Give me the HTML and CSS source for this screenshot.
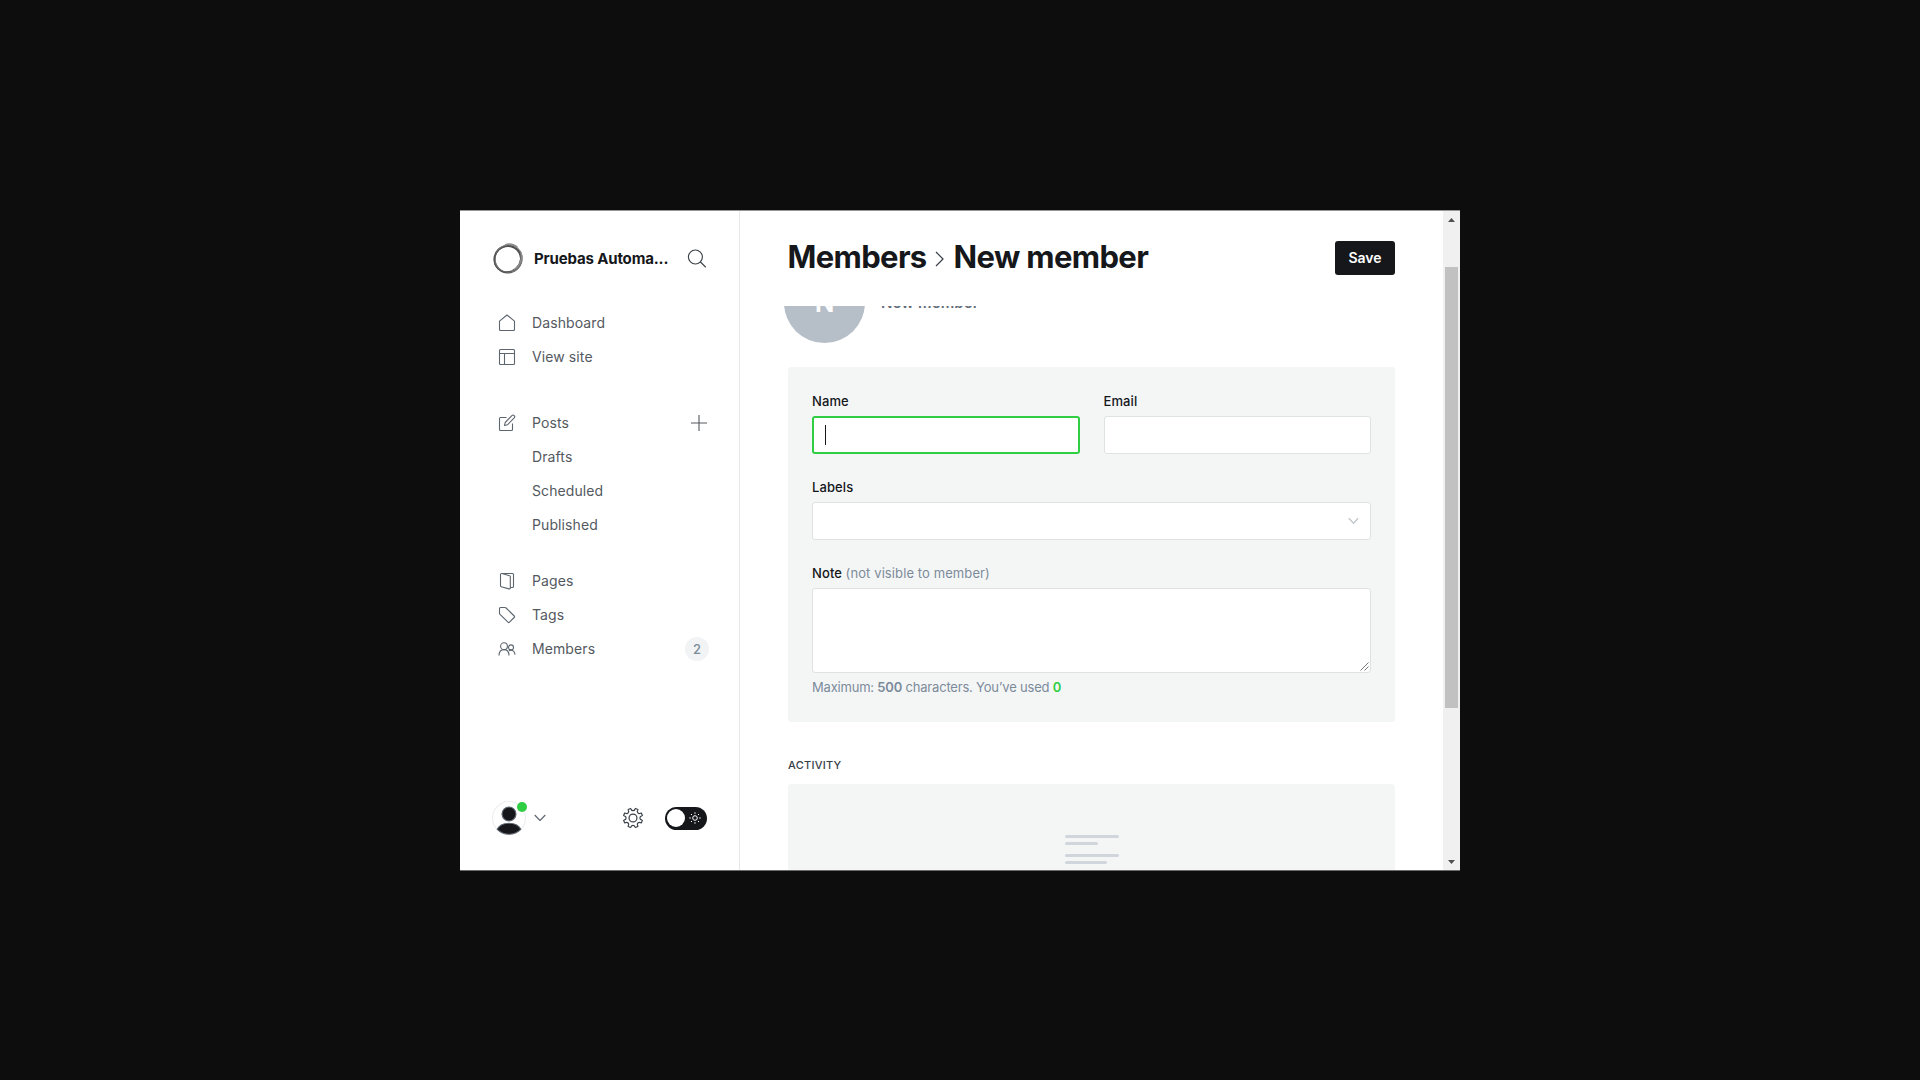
FILE: index.html
```html
<!DOCTYPE html>
<html lang="en">
<head>
<meta charset="utf-8">
<title>New member</title>
<link rel="stylesheet" href="styles.css">
</head>
<body>
<div class="window">
  <nav class="sidebar">
    <header class="site">
      <svg class="logo" viewBox="0 0 32 32" fill="none" stroke="#333">
        <circle cx="15.8" cy="16.2" r="13.3" stroke-width="2" stroke="#4a4a4a"/>
        <ellipse cx="16.6" cy="15.6" rx="13.8" ry="13.4" transform="rotate(-48 16.6 15.6)" stroke-width="1.2" stroke="#777"/>
        <ellipse cx="15.4" cy="16" rx="13.9" ry="12.4" transform="rotate(-42 15.4 16)" stroke-width=".9" stroke="#555"/>
        <path d="M13 1.9C17 .2 22.500 1.200 25.500 4.300M28.800 9.500c2 6-.8 13-5.300 16.500" stroke-width="1.500" stroke="#8d8d8d"/>
      </svg>
      <span class="site-name">Pruebas Automa...</span>
      <svg class="search" viewBox="0 0 20 20" fill="none" stroke="#394047" stroke-width="1.250" stroke-linecap="round"><circle cx="8.400" cy="8" r="7"/><path d="m13.500 13 5 5"/></svg>
    </header>
    <ul class="menu">
      <li><svg viewBox="0 0 18 18"><path d="M1.500 7.200 9 1l7.500 6.200v8.300a1 1 0 0 1-1 1h-13a1 1 0 0 1-1-1z"/></svg><span>Dashboard</span></li>
      <li><svg viewBox="0 0 18 18"><rect x="1.500" y="1.500" width="15" height="15" rx="1"/><path d="M1.500 5.500h15M6.500 5.500v11"/></svg><span>View site</span></li>
    </ul>
    <ul class="menu menu-posts">
      <li><svg viewBox="0 0 18 18"><path d="M8.500 3.500h-6a1 1 0 0 0-1 1v11a1 1 0 0 0 1 1h11a1 1 0 0 0 1-1v-6M6.500 11.500l.7-3 6.700-6.900a1.600 1.600 0 0 1 2.300 2.300l-6.800 6.900z"/></svg><span>Posts</span>
        <svg class="plus" viewBox="0 0 18 18"><path d="M9 1v16M1 9h16"/></svg></li>
      <li class="sub"><span>Drafts</span></li>
      <li class="sub"><span>Scheduled</span></li>
      <li class="sub"><span>Published</span></li>
    </ul>
    <ul class="menu menu-content">
      <li><svg viewBox="0 0 18 18"><path d="M12.500 15.500h2a1 1 0 0 0 1-1v-12a1 1 0 0 0-1-1h-11a1 1 0 0 0-1 1v11.300c0 .5.300.8.700.9l7.800 2.200c.7.200 1.300-.2 1.300-.9V4.600c0-.5-.3-.8-.7-.9L4 1.500"/></svg><span>Pages</span></li>
      <li><svg viewBox="0 0 18 18"><path d="M1.500 2.500a1 1 0 0 1 1-1H7c.4 0 .8.200 1.100.5l8.100 8c.5.500.5 1 0 1.500l-4.700 4.700c-.5.500-1 .5-1.500 0L2 8.300c-.3-.3-.5-.7-.5-1.100z"/></svg><span>Tags</span></li>
      <li><svg viewBox="0 0 18 18"><circle cx="6" cy="6.200" r="3.400"/><circle cx="13" cy="7.400" r="2.500"/><path d="M1 15.500c.1-3.600 2-5.900 5-5.900s4.900 2.300 5 5.900M11 10.800c3.200-1.800 5.900.7 6 4"/></svg><span>Members</span><b class="count">2</b></li>
    </ul>
    <footer class="user-bar">
      <div class="avatar">
        <svg viewBox="0 0 34 34"><circle cx="17" cy="17" r="16.500" fill="#fff" stroke="#eceeef"/><circle cx="17" cy="13" r="7" fill="#15171a"/><path d="M5.200 28.300c2-3.900 6.500-6 11.800-6s9.800 2.100 11.800 6A17 17 0 0 1 17 33.200a17 17 0 0 1-11.800-4.900z" fill="#15171a"/></svg>
        <i class="online"></i>
      </div>
      <svg class="user-caret" viewBox="0 0 12 8"><path d="m.7 1 5.300 5.500L11.300 1"/></svg>
      <svg class="gear" viewBox="0 0 24 24"><circle cx="12" cy="12" r="4.300"/><path d="M9.900 2.400a2.200 2.200 0 0 0 4.200 0l.5-.8 2.700 1.100-.2 1a2.200 2.200 0 0 0 3 3.100l1-.2 1.100 2.700-.9.500a2.200 2.200 0 0 0 0 4.300l.9.600-1.100 2.600-1-.2a2.200 2.200 0 0 0-3 3.100l.2 1-2.700 1.100-.5-.8a2.200 2.200 0 0 0-4.200 0l-.5.8-2.700-1.100.2-1a2.200 2.200 0 0 0-3-3.100l-1 .2-1.100-2.600.9-.6a2.200 2.200 0 0 0 0-4.300l-.9-.5 1.100-2.700 1 .2a2.200 2.200 0 0 0 3-3.100l-.2-1 2.700-1.100z"/></svg>
      <div class="toggle"><i class="knob"></i>
        <svg viewBox="0 0 12 12"><circle cx="6" cy="6" r="2.300"/><path d="M6 .3v1.500M6 10.200v1.500M.3 6h1.500M10.200 6h1.500M2 2l1 1M9 9l1 1M2 10l1-1M9 3l1-1"/></svg>
      </div>
    </footer>
  </nav>
  <main class="main">
    <header class="page-head">
      <h1><span>Members</span><svg class="crumb" viewBox="0 0 9 16"><path d="m1 1 7 7-7 7"/></svg><span>New member</span></h1>
      <button class="save">Save</button>
    </header>
    <div class="scroll-area">
      <div class="member"><div class="initial">N</div><span class="member-name">New member</span></div>
      <section class="panel">
        <div class="row">
          <div class="field"><label>Name</label><div class="input focused"><i class="cursor"></i></div></div>
          <div class="field"><label>Email</label><div class="input"></div></div>
        </div>
        <div class="field"><label>Labels</label><div class="input select"><svg viewBox="0 0 11 8"><path d="m.8 1.200 4.700 5 4.700-5"/></svg></div></div>
        <div class="field"><label>Note <span>(not visible to member)</span></label>
          <div class="input note"><svg viewBox="0 0 9 9"><path d="M.5 8.500l8-8M4.500 8.500l4-4"/></svg></div>
          <p>Maximum: <b>500</b> characters. You’ve used <b class="used">0</b></p></div>
      </section>
      <h4>Activity</h4>
      <section class="activity">
        <i class="line"></i><i class="line short"></i><i class="line second"></i><i class="line medium"></i>
      </section>
    </div>
  </main>
  <div class="scrollbar">
    <svg class="arrow" viewBox="0 0 7 4"><path d="M0 4 3.500 0 7 4z"/></svg>
    <i class="thumb"></i>
    <svg class="arrow" viewBox="0 0 7 4"><path d="M0 0 3.500 4 7 0z"/></svg>
  </div>
</div>
</body>
</html>
```
FILE: styles.css
```css
* { box-sizing: border-box; }
body {
  margin: 0;
  height: 1080px;
  padding: 210px 460px 209px;
  background: #0d0d0d;
  font-family: Inter, "Liberation Sans", sans-serif;
  color: #15171a;
  overflow: hidden;
}
svg { display: block; flex: none; fill: none; stroke: #5d656e; stroke-width: 1.1; stroke-linejoin: round; }
ul, h1, h4, p { margin: 0; padding: 0; }
.window {
  display: flex;
  width: 1000px;
  height: 661px;
  background: #fff;
  border-top: 1px solid #969696;
  border-bottom: 1px solid #6b6b6b;
}

/* Sidebar */
.sidebar { display: flex; flex-direction: column; width: 280px; border-right: 1px solid #e5e7e8; }
.site { display: flex; align-items: center; height: 34px; margin: 30.500px 0 0 32px; }
.logo { width: 32px; height: 32px; }
.site-name { width: 144px; margin: 1px 0 0 10px; font-size: 15px; font-weight: 700; line-height: 20px; letter-spacing: -.15px; white-space: nowrap; }
.search { width: 20px; height: 20px; margin-left: 9px; stroke: #394047; }
.menu { list-style: none; margin: 30px 30px 0 38px; }
.menu-posts { margin-top: 32px; }
.menu-content { margin-top: 22px; }
.menu li { display: flex; align-items: center; height: 34px; font-size: 14px; letter-spacing: .1px; color: #54595f; }
.menu li svg { width: 18px; height: 18px; }
.menu li span { margin-left: 16px; }
.menu .sub span { margin-left: 34px; }
.menu li .plus { margin: 0 1px 0 auto; stroke: #54595f; }
.count { margin-left: auto; width: 24px; height: 24px; border-radius: 12px; background: #f1f3f4; font-weight: 500; font-size: 13px; line-height: 24px; text-align: center; color: #7c8b9a; }
.user-bar { display: flex; align-items: center; height: 34px; margin: auto 32px 35px; }
.avatar { position: relative; width: 34px; height: 34px; }
.avatar svg { width: 34px; height: 34px; }
.online { position: absolute; top: 1px; right: -1px; width: 10px; height: 10px; border-radius: 50%; background: #30cf43; }
.user-caret { width: 12px; height: 8px; margin-left: 8px; }
.gear { width: 22px; height: 22px; margin-left: 76px; stroke: #394047; stroke-width: 1.3; }
.toggle { display: flex; align-items: center; width: 42px; height: 23px; margin-left: auto; padding: 2px 6px 2px 2px; border-radius: 12px; background: #15171a; }
.knob { width: 18px; height: 18px; border-radius: 50%; background: #fff; }
.toggle svg { width: 12px; height: 12px; margin-left: auto; stroke: #fff; stroke-width: 1; }

/* Main column */
.main { display: flex; flex-direction: column; width: 703px; }
.page-head { display: flex; align-items: center; justify-content: space-between; height: 95px; padding: 0 48px 1px 47.500px; }
h1 { display: flex; align-items: center; margin-top: -3px; font-size: 31px; font-weight: 700; line-height: 38px; letter-spacing: -.65px; white-space: nowrap; }
.crumb { width: 9px; height: 16px; margin: 5px 10px 0 8px; stroke: #394047; stroke-width: 1.2; }
.save { width: 60px; height: 34px; padding: 0; border: 0; border-radius: 3px; background: #15171a; color: #fff; font: 600 14px/34px Inter, sans-serif; }
.scroll-area { flex: 1; min-height: 0; overflow: hidden; padding: 0 48px; }
.member { display: flex; align-items: center; height: 81px; margin: -44px 0 0 -4px; }
.initial { width: 81px; height: 81px; border-radius: 50%; background: #b6bec8; color: #fff; font-size: 26px; font-weight: 600; line-height: 81px; text-align: center; }
.member-name { margin-left: 16px; font-size: 15px; font-weight: 600; letter-spacing: .15px; color: #626d79; }
.panel { display: flex; flex-direction: column; gap: 23px; height: 355px; margin-top: 24px; padding: 24px; border-radius: 3px; background: #f4f6f6; }
.row { display: grid; grid-template-columns: 1fr 1fr; gap: 24px; }
label { display: block; height: 25px; font-size: 13px; font-weight: 500; line-height: 20px; letter-spacing: .1px; }
label span, .field p { color: #7c8b9a; font-weight: 400; }
.input { display: flex; align-items: center; height: 38px; border: 1px solid #dfe2e3; border-radius: 3px; background: #fff; }
.focused { border: 2px solid #30cf43; }
.cursor { width: 1px; height: 20px; margin-left: 11px; background: #15171a; }
.select { justify-content: flex-end; padding-right: 11px; }
.select svg { width: 11px; height: 8px; stroke: #c0c7cb; stroke-width: 1.3; }
.note { height: 85px; align-items: flex-end; justify-content: flex-end; padding: 1px; }
.note svg { width: 9px; height: 9px; stroke: #777; stroke-width: 1; }
.field p { margin-top: 4px; font-size: 13px; line-height: 20px; letter-spacing: -.2px; }
.field p b { font-weight: 600; }
.field p .used { color: #30cf43; }
h4 { margin: 36px 0 11px; font-size: 11px; font-weight: 500; line-height: 15px; letter-spacing: .25px; text-transform: uppercase; color: #394047; }
.activity { display: flex; flex-direction: column; height: 200px; padding: 51px 0 0 277px; border-radius: 3px 3px 0 0; background: #f4f6f6; }
.line { width: 54px; height: 3px; margin-bottom: 4px; border-radius: 2px; background: #d1d6dc; }
.short { width: 33px; }
.second { margin-top: 5px; }
.medium { width: 42px; }

/* Scrollbar */
.scrollbar { display: flex; flex-direction: column; align-items: center; width: 17px; padding: 7px 0 6px; background: #f0f0f0; }
.arrow { width: 7px; height: 4px; fill: #505050; stroke: none; }
.thumb { width: 13px; height: 441px; margin: 45px 0 auto; background: #c1c1c1; }
```
